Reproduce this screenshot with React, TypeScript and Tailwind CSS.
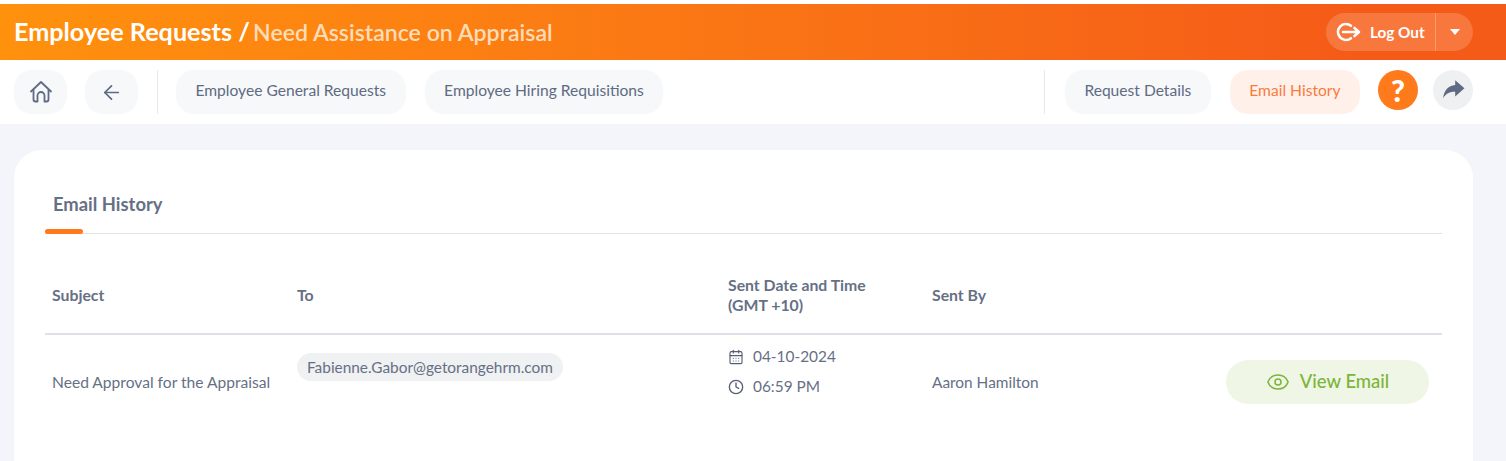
import { ArrowLeft, CalendarDays, Clock, Eye } from 'lucide-react'

function NavPill({ label, active }: { label: string; active?: boolean }) {
  return (
    <button
      className={
        active
          ? 'h-11 px-[19.5px] pb-[2px] rounded-[18px] bg-[#fff1e9] text-[#fb7a3c] text-[15.6px]'
          : 'h-11 px-[19.5px] pb-[2px] rounded-[18px] bg-[#f6f8fa] text-[#5f6b82] text-[15.6px]'
      }
    >
      {label}
    </button>
  )
}

function IconPill({ children }: { children: React.ReactNode }) {
  return <button className="h-11 w-[53px] rounded-[18px] bg-[#f6f8fa] flex items-center justify-center text-[#5f6b82]">{children}</button>
}

export default function App() {
  return (
    <div className="w-[1506px] h-[461px] overflow-hidden bg-[#f4f5fa] pt-1 font-['Lato','Noto_Sans',sans-serif]">
      <div className="absolute top-0 left-0 w-full h-1 bg-white" />
      <header className="h-14 flex items-center justify-between pl-[14px] pr-[33px] bg-gradient-to-r from-[#ff910d] to-[#f55b18] to-90%">
        <h1 className="text-[25.2px] font-bold text-white">
          Employee Requests / <span className="-ml-[3px] text-[23.1px] font-semibold text-[#ffdcb8]">Need Assistance on Appraisal</span>
        </h1>
        <div className="h-[38px] w-[147px] rounded-full bg-[#f7773c] flex items-center text-white">
          <div className="flex-1 flex items-center pl-[9px] gap-[9px] text-[15.3px] font-bold">
            <svg width="26" height="20" viewBox="0 0 26 20" fill="none" stroke="white" strokeWidth="2.6" strokeLinecap="round" strokeLinejoin="round">
              <path d="M16 3.8A8 8 0 1 0 16 16.2" />
              <path d="M8 10h15.5M19.5 6l4.5 4-4.5 4" />
            </svg>
            Log Out
          </div>
          <div className="w-[38px] h-full border-l border-[#fb9a6c] flex items-center justify-center">
            <div className="w-0 h-0 border-x-[5px] border-x-transparent border-t-[6px] border-t-white" />
          </div>
        </div>
      </header>

      <nav className="h-16 bg-white flex items-start pt-[10px] pl-[14px] pr-[33px]">
        <IconPill>
          <svg width="26" height="26" viewBox="0 0 26 26" fill="none" stroke="#5f6b82" strokeWidth="1.8" strokeLinejoin="round" strokeLinecap="round">
            <path d="M3 12.5 13 3l10 9.5" />
            <path d="M5.5 11v9.5a2 2 0 0 0 2 2H9.5v-6a3.5 3.5 0 0 1 7 0v6h2a2 2 0 0 0 2-2V11" />
          </svg>
        </IconPill>
        <div className="w-[18px]" />
        <IconPill>
          <ArrowLeft size={23} strokeWidth={1.8} />
        </IconPill>
        <div className="w-px h-11 bg-[#e6e8ec] ml-[19px] mr-[18px]" />
        <NavPill label="Employee General Requests" />
        <div className="w-[19px]" />
        <NavPill label="Employee Hiring Requisitions" />
        <div className="flex-1" />
        <div className="w-px h-11 bg-[#e6e8ec] mr-5" />
        <NavPill label="Request Details" />
        <div className="w-[19px]" />
        <NavPill label="Email History" active />
        <div className="w-[18px]" />
        <button className="w-10 h-10 rounded-full bg-[#ff7a1a] flex items-center justify-center text-white text-[30px] font-black">?</button>
        <div className="w-[15px]" />
        <button className="w-10 h-10 rounded-full bg-[#eef0f2] flex items-center justify-center">
          <svg width="24" height="22" viewBox="0 0 22 20" fill="#5f6b82">
            <path d="M13 1l8.5 7.5L13 16v-4.5c-5 0-8.5 1.5-11 6 .5-6.5 4.5-11.5 11-12z" />
          </svg>
        </button>
      </nav>

      <main className="mt-[26px] mx-[33px] ml-[14px] bg-white rounded-t-[28px] h-[400px] pt-[42px] px-[31px]">
        <div className="border-b border-[#e0e2e6] h-[42px] relative">
          <span className="pl-2 text-[18.4px] font-bold text-[#667085] leading-6 block">Email History</span>
          <div className="absolute left-0 bottom-[-1px] w-[38px] h-[5px] rounded-full bg-[#ff7a1a]" />
        </div>

        <div className="mt-[26px] h-[75px] pb-[3px] border-b-2 border-[#dfe1e6] flex items-center text-[15.8px] font-bold text-[#667085] leading-5">
          <div className="w-[245px] pl-[7px]">Subject</div>
          <div className="w-[431px] pl-[7px]">To</div>
          <div className="w-[204px] pl-[7px]">
            Sent Date and Time
            <br />
            (GMT +10)
          </div>
          <div className="pl-[7px]">Sent By</div>
        </div>

        <div className="h-[96px] flex items-center text-[15.4px] text-[#667085]">
          <div className="w-[245px] pl-[7px] text-[15.6px]">Need Approval for the Appraisal</div>
          <div className="w-[431px] pl-[7px] self-start pt-[18px]">
            <span className="inline-block h-7 leading-7 px-[10px] rounded-full bg-[#f0f1f3]">Fabienne.Gabor@getorangehrm.com</span>
          </div>
          <div className="w-[204px] pl-[7px] self-start pt-3 flex flex-col gap-[10px]">
            <div className="flex items-center gap-[9px] h-5">
              <CalendarDays size={16} strokeWidth={1.7} className="text-[#565f73]" />
              04-10-2024
            </div>
            <div className="flex items-center gap-[9px] h-5">
              <Clock size={16} strokeWidth={2} className="text-[#565f73]" />
              06:59 PM
            </div>
          </div>
          <div className="flex-1 pl-[7px]">Aaron Hamilton</div>
          <button className="mr-[13px] mb-[2px] h-11 w-[203px] rounded-[22px] bg-[#f0f6e6] text-[#7ab538] text-[18.5px] font-medium flex items-center justify-center gap-[10px]">
            <Eye size={24} strokeWidth={1.5} />
            View Email
          </button>
        </div>
      </main>
    </div>
  )
}
